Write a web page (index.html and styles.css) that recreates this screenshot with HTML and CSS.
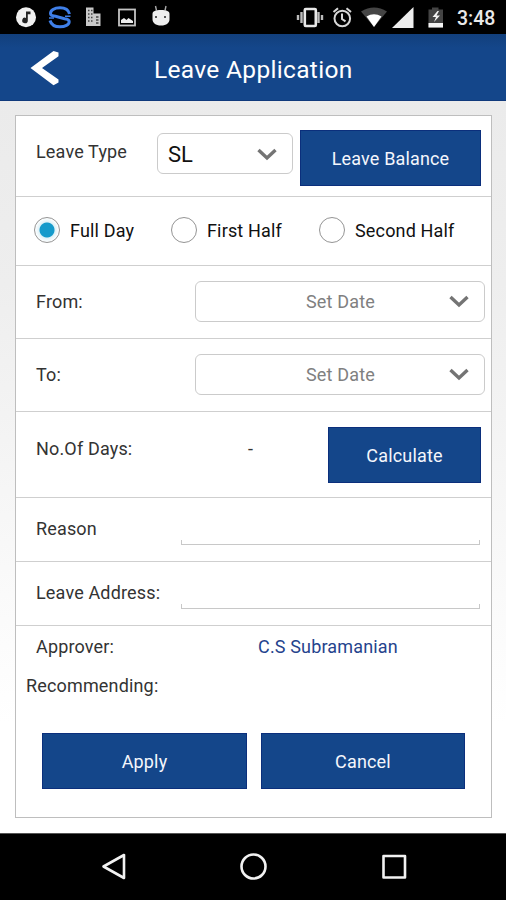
FILE: index.html
```
<!DOCTYPE html>
<html lang="en">
<head>
<meta charset="utf-8">
<title>Leave Application</title>
<link rel="stylesheet" href="styles.css">
</head>
<body>
<div class="status">
  <svg class="notifications" width="180" height="34" viewBox="0 0 180 34">
    <circle cx="26" cy="17.300" r="10" fill="#f0f0f0"/>
    <path d="M26 11.500h4.500v2.800h-2.700v6.200a2.800 2.800 0 1 1-1.800-2.600z" fill="#222"/>
    <path d="M69.500 14C68.500 10 64.500 7.800 60 7.800C54 7.800 50.500 10.500 50.500 13.500C50.500 15.500 52.500 16 55.500 16.300L64.500 18.800C67.500 19.200 69.200 20 69.200 21.800C69.200 24.800 65 26.800 60 26.800C55 26.800 51.200 24.500 50 20.500" fill="none" stroke="#3f7fe8" stroke-width="3"/>
    <path d="M49 18h5M65 16.300h5.500" stroke="#3f7fe8" stroke-width="1.600"/>
    <path d="M86 7.500h7.500V26H86zM93.500 13.500h7V26h-7z" fill="#c9c9c9"/>
    <path d="M88 10.500h1.500M91 10.500h1.500M88 14h1.500M91 14h1.500M88 17.500h1.500M91 17.500h1.500M88 21h1.500M91 21h1.500M96 17h2.500M96 20h2.500M96 23h2.500" stroke="#444" stroke-width="1.700"/>
    <rect x="119" y="9.500" width="16" height="16" fill="none" stroke="#c4c4c4" stroke-width="1.800"/>
    <path d="M121 23v-3l3-2 2.500 2 2-2 4.500 3v2z" fill="#eee"/>
    <path d="M155.500 6l1 4.500M166 6l-1 4.500" stroke="#aaa" stroke-width="1.400"/>
    <path d="M152.500 14c0-3 3-4 8.500-4s8.500 1 8.500 4v5c0 4-3 6.500-8.500 6.500s-8.500-2.500-8.500-6.500z" fill="#eee"/>
    <circle cx="156" cy="17" r="1" fill="#222"/><circle cx="165" cy="17" r="1" fill="#222"/>
  </svg>
  <svg class="system" width="150" height="34" viewBox="296 0 150 34">
    <path d="M298 15v5M301.500 12v11M318.500 12v11M322 15v5" stroke="#bbb" stroke-width="2.400"/>
    <rect x="304.800" y="9" width="11" height="17" rx="1" fill="none" stroke="#e8e8e8" stroke-width="2.600"/>
    <circle cx="342.300" cy="18.500" r="7.800" fill="none" stroke="#d8d8d8" stroke-width="2"/>
    <path d="M342 13.500v5.500l3.500 2.300M333.500 12l4.500-3.800M351 12l-4.500-3.800" fill="none" stroke="#d8d8d8" stroke-width="2"/>
    <path d="M361 11.500Q374 3.500 387 11.500L374 27z" fill="#454545"/>
    <path d="M366.500 16.500Q374 12 381.500 16.500L374 27z" fill="#fff"/>
    <path d="M413.500 7v21H392z" fill="#eee"/>
    <path d="M428.500 9.500h3.500V7.500h6.500v2h4.500v18h-14.500z" fill="#444"/>
    <path d="M428.500 23h14.500v4.500h-14.500zM437.500 11l-5 6h3.500l-2 5 6-6.500h-3.500l2.500-4.500z" fill="#f4f4f4"/>
  </svg>
  <span class="clock">3:48</span>
</div>
<header class="header">
  <svg class="back" width="30" height="36" viewBox="0 0 30 36"><path d="M24.500 1L29.500 2.500V6.300L13 18 29.500 29.500V32.500L24.500 35.300 1.500 18z" fill="#fff"/></svg>
  <h1 class="title">Leave Application</h1>
</header>
<main class="page">
  <form class="card">
    <div class="row type-row">
      <span class="label">Leave Type</span>
      <div class="select type-select"><span class="value">SL</span><svg class="chevron" width="20" height="14" viewBox="0 0 20 14"><path d="M1.500 2l8.500 8L18.500 2" fill="none" stroke="#747474" stroke-width="3.400"/></svg></div>
      <button type="button" class="button balance">Leave Balance</button>
    </div>
    <div class="row radio-row">
      <label class="option full"><span class="radio checked"></span><span class="option-text">Full Day</span></label>
      <label class="option first"><span class="radio"></span><span class="option-text">First Half</span></label>
      <label class="option second"><span class="radio"></span><span class="option-text">Second Half</span></label>
    </div>
    <div class="row date-row">
      <span class="label">From:</span>
      <div class="select date-select"><span class="placeholder">Set Date</span><svg class="chevron" width="20" height="14" viewBox="0 0 20 14"><path d="M1.500 2l8.500 8L18.500 2" fill="none" stroke="#747474" stroke-width="3.400"/></svg></div>
    </div>
    <div class="row date-row">
      <span class="label">To:</span>
      <div class="select date-select"><span class="placeholder">Set Date</span><svg class="chevron" width="20" height="14" viewBox="0 0 20 14"><path d="M1.500 2l8.500 8L18.500 2" fill="none" stroke="#747474" stroke-width="3.400"/></svg></div>
    </div>
    <div class="row days-row">
      <span class="label">No.Of Days:</span>
      <span class="count">-</span>
      <button type="button" class="button calculate">Calculate</button>
    </div>
    <div class="row text-row">
      <span class="label">Reason</span><span class="field"></span>
    </div>
    <div class="row text-row">
      <span class="label">Leave Address:</span><span class="field"></span>
    </div>
    <div class="approver-row"><span class="label">Approver:</span><span class="name">C.S Subramanian</span></div>
    <div class="recommending-row"><span>Recommending:</span></div>
    <div class="actions">
      <button type="button" class="button apply">Apply</button>
      <button type="button" class="button cancel">Cancel</button>
    </div>
  </form>
</main>
<nav class="navbar">
  <svg width="28" height="32" viewBox="0 0 28 32"><path d="M24 5v23L3.500 16.500z" fill="none" stroke="#f2f2f2" stroke-width="2.600" stroke-linejoin="round"/></svg>
  <svg width="28" height="32" viewBox="0 0 28 32"><circle cx="13.500" cy="16.500" r="12" fill="none" stroke="#f2f2f2" stroke-width="2.600"/></svg>
  <svg width="28" height="32" viewBox="0 0 28 32"><rect x="3.500" y="6" width="21.500" height="21.500" fill="none" stroke="#f2f2f2" stroke-width="2.600" stroke-linejoin="round"/></svg>
</nav>
</body>
</html>
```
FILE: styles.css
```
* { box-sizing: border-box; }
body {
  margin: 0;
  width: 506px;
  height: 900px;
  overflow: hidden;
  font-family: Roboto, "Liberation Sans", sans-serif;
  font-size: 18px;
  line-height: 22px;
  letter-spacing: 0.16px;
  color: #333;
  white-space: nowrap;
  display: flex;
  flex-direction: column;
}
svg { display: block; flex: none; }
.status {
  height: 34px;
  background: #000;
  display: flex;
  align-items: center;
}
.system { margin-left: 116px; }
.clock {
  margin-left: 11px;
  font-size: 19.5px;
  font-weight: 500;
  letter-spacing: 0;
  color: #e9e9e9;
  padding-top: 3px;
}
.header {
  height: 67px;
  background: linear-gradient(#123f7c, #14468a 14px);
  border-bottom: 1px solid #103a7c;
  display: flex;
}
.back { margin: 16px 0 0 29px; }
.title {
  margin: 21px 0 0 95px;
  font-size: 24.5px;
  line-height: 30px;
  font-weight: 400;
  letter-spacing: 0.32px;
  color: #fff;
}
.page {
  height: 732px;
  padding: 14px 14px 0 15px;
  background: linear-gradient(#ebebeb, #eee 25%, #fff 85%);
}
.card {
  height: 703px;
  background: #fff;
  border: 1px solid #bebebe;
}
.row {
  display: flex;
  align-items: flex-start;
  border-bottom: 1px solid #cfcfcf;
}
.label { flex: none; margin-left: 20px; width: 121px; }
.select {
  display: flex;
  align-items: center;
  height: 41px;
  border: 1px solid #cbcbcb;
  border-radius: 6px;
  background: #fff;
}
.button {
  height: 56px;
  padding: 1px 0 0;
  border: 1px solid #0b2f7c;
  background: #14468a;
  color: #f4f6fc;
  font: inherit;
  letter-spacing: inherit;
}
.type-row { height: 81px; }
.type-row .label { margin-top: 25px; }
.type-select { width: 136px; margin-top: 17px; padding: 2px 15px 0 10px; justify-content: space-between; }
.value { font-size: 22px; letter-spacing: 0; color: #111; }
.balance { width: 181px; margin: 14px 0 0 7px; }
.radio-row { height: 69px; color: #111; }
.option { display: flex; align-items: center; margin-top: 20px; gap: 10px; height: 26px; }
.option-text { padding-top: 2px; }
.full { margin-left: 18px; width: 137px; }
.first { width: 148px; }
.radio {
  flex: none;
  width: 26px;
  height: 26px;
  border: 1px solid #949494;
  border-radius: 50%;
}
.checked { background: radial-gradient(circle, #149acb 7px, #def1f7 8px, #fff 12px); }
.date-row { height: 73px; }
.date-row .label { width: 160px; margin-top: 25px; }
.date-select { width: 290px; margin-top: 15px; margin-left: -1px; padding: 1px 15px 0 110px; justify-content: space-between; color: #808080; }
.days-row { height: 86px; }
.days-row .label { width: 212px; margin-top: 26px; }
.count { width: 80px; margin-top: 26px; }
.calculate { width: 153px; margin-top: 15px; }
.text-row { height: 64px; }
.text-row .label { width: 145px; margin-top: 20px; }
.field {
  width: 299px;
  height: 5px;
  margin-top: 42px;
  border: 1px solid #c8c8c8;
  border-top: 0;
}
.approver-row { display: flex; padding-top: 10px; }
.approver-row .label { width: 222px; }
.name { color: #25438d; }
.recommending-row { padding: 17px 0 0 10px; }
.actions { display: flex; gap: 14px; margin: 36px 0 0 26px; }
.apply { width: 205px; }
.cancel { width: 204px; }
.navbar {
  height: 67px;
  background: #000;
  border-top: 1px solid #555;
  display: flex;
  justify-content: center;
  gap: 112px;
  padding: 16px 0 0 1px;
}
```
